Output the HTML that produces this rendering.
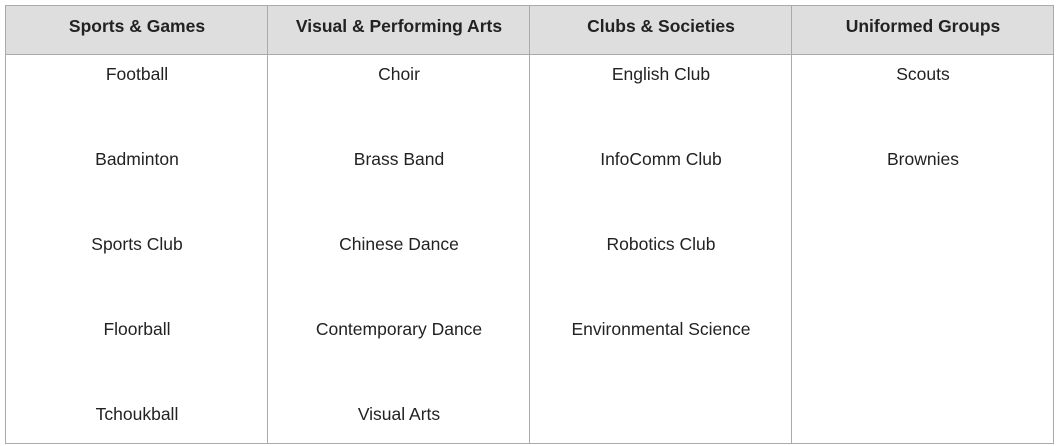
<!DOCTYPE html>
<html><head><style>
body{margin:0;background:#fff;font-family:"Liberation Sans",sans-serif;color:#222;}
.t{position:absolute;left:5px;top:5px;width:1047px;height:437px;border:1px solid #aaa;}
.h{position:absolute;left:0;top:0;width:1047px;height:48px;background:#dedede;border-bottom:1px solid #aaa;}
.v{position:absolute;top:0;width:1px;height:437px;background:#aaa;}
.c{position:absolute;width:262px;text-align:center;font-size:17.5px;}
.hd{font-weight:bold;top:10px;}
</style></head><body>
<div class="t">
<div class="h"></div>
<div class="v" style="left:261px"></div>
<div class="v" style="left:523px"></div>
<div class="v" style="left:785px"></div>
<div class="c hd" style="left:0">Sports &amp; Games</div>
<div class="c hd" style="left:262px">Visual &amp; Performing Arts</div>
<div class="c hd" style="left:524px">Clubs &amp; Societies</div>
<div class="c hd" style="left:786px">Uniformed Groups</div>

<div class="c" style="left:0;top:58px">Football</div>
<div class="c" style="left:0;top:143px">Badminton</div>
<div class="c" style="left:0;top:228px">Sports Club</div>
<div class="c" style="left:0;top:313px">Floorball</div>
<div class="c" style="left:0;top:398px">Tchoukball</div>

<div class="c" style="left:262px;top:58px">Choir</div>
<div class="c" style="left:262px;top:143px">Brass Band</div>
<div class="c" style="left:262px;top:228px">Chinese Dance</div>
<div class="c" style="left:262px;top:313px">Contemporary Dance</div>
<div class="c" style="left:262px;top:398px">Visual Arts</div>

<div class="c" style="left:524px;top:58px">English Club</div>
<div class="c" style="left:524px;top:143px">InfoComm Club</div>
<div class="c" style="left:524px;top:228px">Robotics Club</div>
<div class="c" style="left:524px;top:313px">Environmental Science</div>

<div class="c" style="left:786px;top:58px">Scouts</div>
<div class="c" style="left:786px;top:143px">Brownies</div>
</div>
</body></html>
